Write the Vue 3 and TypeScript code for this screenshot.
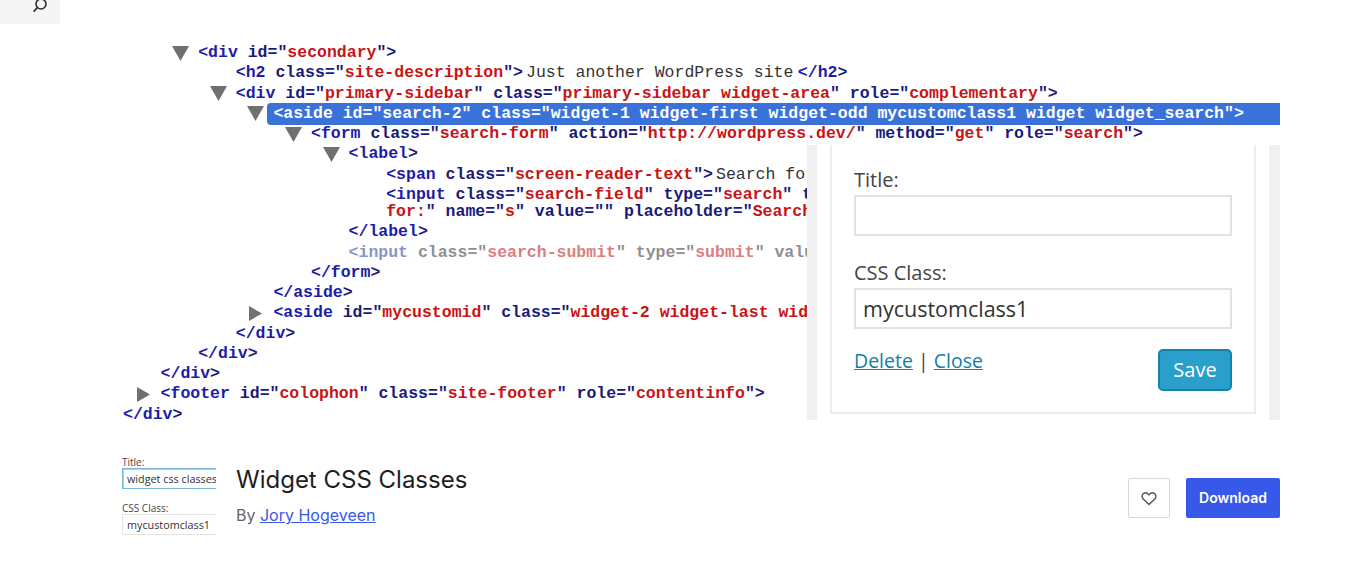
<script setup lang="ts">
interface Token { text: string; kind: string }
interface Line {
  level: number
  arrow?: 'down' | 'right'
  selected?: boolean
  muted?: boolean
  tight?: boolean
  clipped?: boolean
  tokens: Token[]
}

function tokenize(src: string): Token[] {
  const out: Token[] = []
  const re = /(=")([^"]*)("?)|(<\/?[a-z0-9]+)|(>)/g
  let last = 0
  let m: RegExpExecArray | null
  while ((m = re.exec(src))) {
    if (m.index > last) out.push({ text: src.slice(last, m.index), kind: 'attr' })
    if (m[1]) {
      out.push({ text: m[1], kind: 'attr' })
      out.push({ text: m[2], kind: 'val' })
      if (m[3]) out.push({ text: m[3], kind: 'attr' })
    } else if (m[4]) {
      out.push({ text: m[4], kind: 'tag' })
    } else {
      out.push({ text: m[5], kind: 'attr' })
    }
    last = m.index + m[0].length
  }
  if (last < src.length) out.push({ text: src.slice(last), kind: 'attr' })
  return out
}

function mk(level: number, text: string, opts: Partial<Line> = {}): Line {
  return { level, tokens: tokenize(text), ...opts }
}

const h2: Line = {
  level: 3,
  tokens: [
    ...tokenize('<h2 class="site-description">'),
    { text: 'Just another WordPress site', kind: 'plain' },
    { text: '</h2', kind: 'tag' },
    { text: '>', kind: 'attr' }
  ]
}
const spanLine: Line = {
  level: 7,
  clipped: true,
  tokens: [
    ...tokenize('<span class="screen-reader-text">'),
    { text: 'Search for:', kind: 'plain' }
  ]
}
const forLine: Line = {
  level: 7,
  tight: true,
  clipped: true,
  tokens: [
    { text: 'for:', kind: 'val' },
    ...tokenize('" name="s" value="" placeholder="Search')
  ]
}

const lines: Line[] = [
  mk(2, '<div id="secondary">', { arrow: 'down' }),
  h2,
  mk(3, '<div id="primary-sidebar" class="primary-sidebar widget-area" role="complementary">', { arrow: 'down' }),
  mk(4, '<aside id="search-2" class="widget-1 widget-first widget-odd mycustomclass1 widget widget_search">', { arrow: 'down', selected: true }),
  mk(5, '<form class="search-form" action="http://wordpress.dev/" method="get" role="search">', { arrow: 'down' }),
  mk(6, '<label>', { arrow: 'down' }),
  spanLine,
  mk(7, '<input class="search-field" type="search" title', { clipped: true }),
  forLine,
  mk(6, '</label>'),
  mk(6, '<input class="search-submit" type="submit" value', { muted: true, clipped: true }),
  mk(5, '</form>'),
  mk(4, '</aside>'),
  mk(4, '<aside id="mycustomid" class="widget-2 widget-last widget', { arrow: 'right', clipped: true }),
  mk(3, '</div>'),
  mk(2, '</div>'),
  mk(1, '</div>'),
  mk(1, '<footer id="colophon" class="site-footer" role="contentinfo">', { arrow: 'right' }),
  mk(0, '</div>')
]

const indent = (level: number) => ({ paddingLeft: `${1 + level * 37.6}px` })
</script>

<template>
  <div class="page">
    <div class="search-tab">
      <svg class="search-icon" width="18" height="18" viewBox="0 0 18 18" fill="none" stroke="#2b2b2b" stroke-width="1.6">
        <circle cx="11" cy="5" r="5" />
        <path d="M7.3 8.6 3.6 12.6" />
      </svg>
    </div>

    <section class="banner">
      <div class="code">
        <div
          v-for="(line, i) in lines"
          :key="i"
          class="line"
          :class="{ muted: line.muted, tight: line.tight, clipped: line.clipped }"
          :style="indent(line.level)"
        >
          <svg v-if="line.arrow === 'down'" class="arrow" width="17" height="15" viewBox="0 0 17 15">
            <path d="M0 0H17L8.5 15Z" fill="#707070" />
          </svg>
          <svg v-else-if="line.arrow === 'right'" class="arrow" width="17" height="15" viewBox="0 0 17 15">
            <path d="M2 0 15 7.5 2 15Z" fill="#707070" />
          </svg>
          <span class="content" :class="{ selected: line.selected }"><span
            v-for="(t, j) in line.tokens"
            :key="j"
            :class="t.kind"
          >{{ t.text }}</span></span>
        </div>
      </div>

      <div class="panel">
        <div class="card">
          <label class="field-label">Title:</label>
          <div class="field"></div>
          <label class="field-label second">CSS Class:</label>
          <div class="field">mycustomclass1</div>
          <div class="actions">
            <div class="links"><a>Delete</a> | <a>Close</a></div>
            <button class="save" type="button">Save</button>
          </div>
        </div>
      </div>
    </section>

    <section class="plugin">
      <div class="thumb">
        <div class="thumb-label">Title:</div>
        <div class="thumb-input focus"><span class="caret">widget css classes</span></div>
        <div class="thumb-label lower">CSS Class:</div>
        <div class="thumb-input">mycustomclass1</div>
      </div>
      <div class="meta">
        <h1>Widget CSS Classes</h1>
        <p>By <a>Jory Hogeveen</a></p>
      </div>
      <div class="buttons">
        <button class="fav" type="button" aria-label="Favorite">
          <svg width="16" height="15" viewBox="0 0 16 15" fill="none" stroke="#555" stroke-width="1.4">
            <path d="M8 13.6 2.2 7.900C.6 6.300.8 3.800 2.400 2.600 4 1.500 6.300 1.700 8 3.900 9.700 1.700 12 1.500 13.600 2.600 15.200 3.800 15.400 6.300 13.800 7.900Z" stroke-linejoin="round" />
          </svg>
        </button>
        <button class="download" type="button">Download</button>
      </div>
    </section>
  </div>
</template>

<style scoped>
.page {
  width: 1356px;
  height: 570px;
  overflow: hidden;
  background: #fff;
  font-family: Inter, "Liberation Sans", sans-serif;
}
.search-tab {
  width: 60px;
  height: 24px;
  background: #f5f5f5;
  overflow: hidden;
  position: relative;
}
.search-icon {
  position: absolute;
  left: 30px;
  top: -1px;
}
.banner {
  position: relative;
  margin-left: 122px;
  width: 1158px;
  height: 408px;
  overflow: hidden;
}
.code {
  padding-top: 19px;
  font: bold 16.5px/20.25px "Liberation Mono", monospace;
  white-space: pre;
}
.line {
  display: flex;
  align-items: center;
  height: 20.25px;
}
.line.clipped {
  box-sizing: border-box;
  width: 685px;
  overflow: hidden;
}
.line.tight {
  margin-top: -3px;
}
.arrow {
  flex: none;
  margin-left: -26px;
  margin-right: 9px;
}
.content {
  flex: 1;
}
.content.selected {
  margin-left: -6px;
  padding-left: 6px;
  height: 22px;
  line-height: 21px;
  background: #3a72d9;
  border-radius: 4px 0 0 4px;
}
.tag { color: #1c1ca8; }
.attr { color: #1a1a78; }
.val { color: #c81414; }
.plain { color: #333; font-weight: normal; margin: 0 4.5px 0 3px; }
.selected span { color: #fff; }
.muted .tag { color: #8a94c8; }
.muted .attr { color: #8f8f8f; }
.muted .val { color: #d98080; }

.panel {
  position: absolute;
  left: 685px;
  top: 121px;
  width: 473px;
  height: 275px;
  box-sizing: border-box;
  background: #fff;
  border-left: 10px solid #f0f0f0;
  border-right: 11px solid #f0f0f0;
  padding: 0 13px;
}
.card {
  height: 269px;
  box-sizing: border-box;
  background: #fff;
  border: 2px solid #ededed;
  border-top: none;
  padding: 21px 22px 0;
  color: #444;
  font-family: "Open Sans", sans-serif;
}
.field-label {
  display: block;
  font-size: 20px;
  line-height: 28px;
  height: 29px;
}
.field-label.second {
  margin-top: 23px;
}
.field {
  height: 41px;
  box-sizing: border-box;
  border: 2px solid #e2e2e2;
  padding-left: 7px;
  font-size: 21.5px;
  line-height: 37px;
  color: #333;
}
.actions {
  display: flex;
  justify-content: space-between;
  margin-top: 20px;
}
.links {
  font-size: 19.5px;
  line-height: 26px;
  margin-top: -1px;
  color: #444;
}
.links a {
  color: #0f7fa5;
  text-decoration: underline;
}
.save {
  width: 74px;
  height: 42px;
  padding: 0 0 2px;
  background: #2a9fcb;
  border: 2px solid #1482ad;
  border-radius: 5px;
  color: #fff;
  font: 20px "Open Sans", sans-serif;
}

.plugin {
  display: flex;
  align-items: flex-start;
  margin: 24px 0 0 122px;
  width: 1158px;
}
.thumb {
  width: 94px;
  height: 81px;
  overflow: hidden;
  font-family: "Open Sans", sans-serif;
  color: #444;
}
.thumb-label {
  font-size: 10px;
  line-height: 12px;
}
.thumb-label.lower {
  margin-top: 13px;
}
.thumb-input {
  width: 94px;
  height: 21px;
  box-sizing: border-box;
  border: 1px solid #e4e4e4;
  border-right: none;
  padding-left: 4px;
  font-size: 10.8px;
  line-height: 19px;
  color: #333;
  white-space: nowrap;
}
.thumb-input.focus {
  border-color: #7db6dc;
  box-shadow: inset 1px 1px 0 #a9d0e8;
}
.caret {
  border-right: 1px solid #333;
}
.meta {
  margin-left: 20px;
  padding-top: 8px;
}
.meta h1 {
  margin: 0;
  font-size: 24px;
  font-weight: 400;
  line-height: 32px;
  color: #1e1e1e;
}
.meta p {
  margin: 7px 0 0;
  font-size: 16px;
  line-height: 24px;
  color: #656565;
}
.meta a {
  color: #3858e9;
  text-decoration: underline;
}
.buttons {
  display: flex;
  gap: 16px;
  margin-left: auto;
  margin-top: 22px;
}
.fav {
  width: 42px;
  height: 40px;
  display: flex;
  align-items: center;
  justify-content: center;
  padding: 0;
  background: #fff;
  border: 1px solid #d8d8d8;
  border-radius: 2px;
}
.download {
  width: 94px;
  height: 40px;
  padding: 0 0 2px;
  background: #3858e9;
  border: none;
  border-radius: 2px;
  color: #fff;
  font: 600 14px Inter, sans-serif;
}
</style>
